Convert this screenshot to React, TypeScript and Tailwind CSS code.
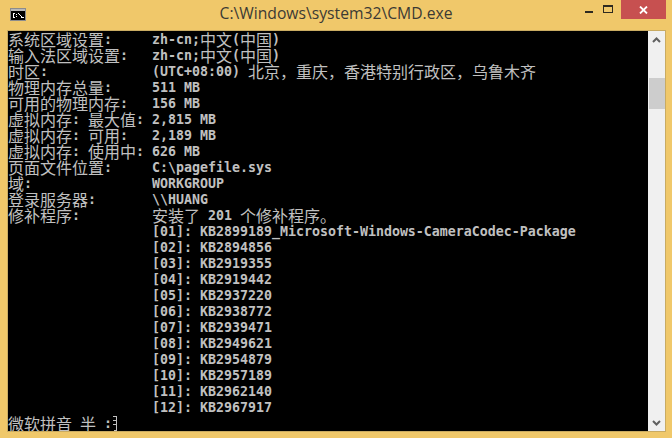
const cjk = /([^\x00-\x7f]+)/;

function Text({ s }: { s: string }) {
  return (
    <>
      {s.split(cjk).map((p, i) =>
        i % 2 === 1 ? (
          <span key={i} className="inline-block align-top h-4 text-[16px] font-normal font-['Noto_Sans_CJK_SC',sans-serif] leading-[16px]">
            {p}
          </span>
        ) : (
          <span key={i} className="inline-block align-top h-4 leading-[17px]">{p}</span>
        )
      )}
    </>
  );
}

function Row({ label, value }: { label: string; value?: string }) {
  return (
    <div className="flex h-4 whitespace-pre">
      <div className="w-[144px] shrink-0 h-4">
        <Text s={label} />
      </div>
      {value && (
        <div className="h-4">
          <Text s={value} />
        </div>
      )}
    </div>
  );
}

const rows: [string, string][] = [
  ["系统区域设置:", "zh-cn;中文(中国)"],
  ["输入法区域设置:", "zh-cn;中文(中国)"],
  ["时区:", "(UTC+08:00) 北京，重庆，香港特别行政区，乌鲁木齐"],
  ["物理内存总量:", "511 MB"],
  ["可用的物理内存:", "156 MB"],
  ["虚拟内存: 最大值:", "2,815 MB"],
  ["虚拟内存: 可用:", "2,189 MB"],
  ["虚拟内存: 使用中:", "626 MB"],
  ["页面文件位置:", "C:\\pagefile.sys"],
  ["域:", "WORKGROUP"],
  ["登录服务器:", "\\\\HUANG"],
  ["修补程序:", "安装了 201 个修补程序。"],
  ["", "[01]: KB2899189_Microsoft-Windows-CameraCodec-Package"],
  ["", "[02]: KB2894856"],
  ["", "[03]: KB2919355"],
  ["", "[04]: KB2919442"],
  ["", "[05]: KB2937220"],
  ["", "[06]: KB2938772"],
  ["", "[07]: KB2939471"],
  ["", "[08]: KB2949621"],
  ["", "[09]: KB2954879"],
  ["", "[10]: KB2957189"],
  ["", "[11]: KB2962140"],
  ["", "[12]: KB2967917"],
];

export default function App() {
  return (
    <div className="w-[672px] h-[438px] bg-[#f0c86a] flex flex-col overflow-hidden">
      <div className="h-[30px] shrink-0 relative flex items-center justify-center">
        <svg className="absolute left-[10px] top-[8px]" width="16" height="13" viewBox="0 0 16 13" shapeRendering="crispEdges">
          <rect x="0.5" y="0.5" width="15" height="12" fill="#000" stroke="#8c8c8c" />
          <rect x="1" y="1" width="14" height="2" fill="#b8b8b8" />
          <path d="M3 5h2M3 6v3M3 9h2M6.5 6v1M6.5 8v1M8 5v1M9 6v1M10 7v1M11 8v1M11 9.5h3" stroke="#fff" strokeWidth="1" fill="none" />
        </svg>
        <span className="text-[15.7px] text-[#3c3a34] font-['Open_Sans',sans-serif] relative top-[-1px]">
          C:\Windows\system32\CMD.exe
        </span>
        <div className="absolute right-[6px] top-0 flex items-start">
          <svg className="mr-[10px] mt-[10px]" width="8" height="3" viewBox="0 0 8 3">
            <rect width="8" height="2" y="1" fill="#2e2a20" />
          </svg>
          <svg className="mr-[8px] mt-[5px]" width="10" height="8" viewBox="0 0 10 8" shapeRendering="crispEdges">
            <rect x="0.5" y="0.5" width="9" height="7" fill="none" stroke="#2e2a20" />
            <rect x="0" y="0" width="10" height="2" fill="#2e2a20" />
          </svg>
          <div className="w-[45px] h-[19px] bg-[#c75050] flex items-center justify-center">
            <svg width="9" height="8" viewBox="0 0 9 8">
              <path d="M1 0.5L8 7.5M8 0.5L1 7.5" stroke="#fff" strokeWidth="1.8" />
            </svg>
          </div>
        </div>
      </div>
      <div className="ml-[7px] mr-[6px] h-[400px] flex bg-black border border-[#c9ab62] box-content">
        <div className="w-[640px] h-[400px] overflow-hidden text-[#c0c0c0] text-[13.29px] font-bold font-['DejaVu_Sans_Mono',monospace]">
          {rows.map(([l, v], i) => (
            <Row key={i} label={l} value={v} />
          ))}
          <div className="h-4 flex whitespace-pre">
            <Text s="微软拼音 半 :" />
            <svg className="ml-[1px]" width="5" height="16" viewBox="0 0 5 16" shapeRendering="crispEdges">
              <path d="M0 1.5h3.5M0 5.5h3.5M0 9.5h3.5M3.5 1v15M1 15.5h2" stroke="#c0c0c0" fill="none" />
            </svg>
          </div>
        </div>
        <div className="w-[17px] h-[400px] bg-[#f0f0f0] flex flex-col items-center">
          <svg className="mt-[6px] shrink-0" width="9" height="6" viewBox="0 0 9 6">
            <path d="M1 5L4.5 1.5L8 5" stroke="#606060" strokeWidth="2" fill="none" />
          </svg>
          <div className="mt-[35px] self-end w-[16px] h-[31px] bg-[#cdcdcd]" />
          <div className="flex-1" />
          <svg className="mb-[5px] shrink-0" width="9" height="6" viewBox="0 0 9 6">
            <path d="M1 1L4.5 4.5L8 1" stroke="#606060" strokeWidth="2" fill="none" />
          </svg>
        </div>
      </div>
    </div>
  );
}
